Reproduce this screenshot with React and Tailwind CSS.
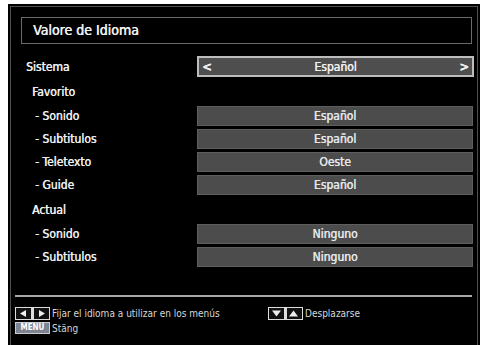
import React from 'react';

const favoritos = [
    { label: '- Sonido', value: 'Español' },
    { label: '- Subtitulos', value: 'Español' },
    { label: '- Teletexto', value: 'Oeste' },
    { label: '- Guide', value: 'Español' },
];

const actuales = [
    { label: '- Sonido', value: 'Ninguno' },
    { label: '- Subtitulos', value: 'Ninguno' },
];

function ValueRow({ label, value }) {
    return (
        <div className="flex h-[20px] items-center">
            <div className="w-[176px] pl-[14px] text-[12px] text-[#ececec] [text-shadow:0.4px_0_0_#ececec]">{label}</div>
            <div className="flex h-[20px] w-[276px] items-center justify-center border border-[#5e5e5e] bg-[#4c4c4c] text-[12px] text-[#e6e6e6] [text-shadow:0.4px_0_0_#e6e6e6]">
                {value}
            </div>
        </div>
    );
}

function LeftRightKey() {
    return (
        <svg width="35" height="13" viewBox="0 0 35 13">
            <rect x="0.5" y="0.5" width="34" height="12" fill="#111" stroke="#ddd" />
            <rect x="16" y="1" width="3" height="11" fill="#ddd" />
            <polygon points="11,3 11,10 5,6.5" fill="#eee" />
            <polygon points="24,3 24,10 30,6.5" fill="#eee" />
        </svg>
    );
}

function DownUpKey() {
    return (
        <svg width="35" height="13" viewBox="0 0 35 13">
            <rect x="0.5" y="0.5" width="34" height="12" fill="#111" stroke="#ddd" />
            <rect x="16" y="1" width="3" height="11" fill="#ddd" />
            <polygon points="4,3.5 13,3.5 8.5,9.5" fill="#eee" />
            <polygon points="21,9.5 30,9.5 25.5,3.5" fill="#eee" />
        </svg>
    );
}

export default function App() {
    return (
        <div className="h-[345px] w-[482px] overflow-hidden bg-white pl-[8px] pt-[4px] font-['DejaVu_Sans_Condensed','DejaVu_Sans',sans-serif]">
            <div className="h-[345px] w-[472px] bg-black px-[2px] pt-[2px]">
                <div className="h-[345px] border border-[#4e4e4e] pl-[10px]">
                    {/* title */}
                    <div className="mt-[10px] flex h-[27px] w-[451px] items-center border border-[#6a6a6a] pl-[11px] text-[14px] text-[#f2f2f2] [text-shadow:0.4px_0_0_#f2f2f2]">
                        Valore de Idioma
                    </div>

                    {/* Sistema */}
                    <div className="mt-[12px] flex h-[21px] items-center">
                        <div className="w-[176px] pl-[5px] text-[12px] text-[#f0f0f0] [text-shadow:0.4px_0_0_#f0f0f0]">Sistema</div>
                        <div className="flex h-[21px] w-[277px] items-center justify-between border-2 border-[#bdbdbd] bg-[#4e4e4e] px-[3px] text-[12px] text-[#f0f0f0] [text-shadow:0.4px_0_0_#f0f0f0]">
                            <span className="text-[13px] font-bold">&lt;</span>
                            <span>Español</span>
                            <span className="text-[13px] font-bold">&gt;</span>
                        </div>
                    </div>

                    <div className="flex h-[29px] items-center pl-[11px] text-[12px] text-[#f0f0f0] [text-shadow:0.4px_0_0_#f0f0f0]">Favorito</div>
                    <div className="flex flex-col gap-[3px]">
                        {favoritos.map((r, i) => (
                            <ValueRow key={i} label={r.label} value={r.value} />
                        ))}
                    </div>

                    <div className="flex h-[29px] items-center pl-[11px] text-[12px] text-[#f0f0f0] [text-shadow:0.4px_0_0_#f0f0f0]">Actual</div>
                    <div className="flex flex-col gap-[3px]">
                        {actuales.map((r, i) => (
                            <ValueRow key={i} label={r.label} value={r.value} />
                        ))}
                    </div>

                    {/* separator */}
                    <div className="-ml-[6px] mt-[28px] h-[2px] w-[457px] bg-[#a8a8a8]" />

                    {/* footer */}
                    <div className="-ml-[6px] mt-[10px] flex flex-col gap-[2px] text-[10px] text-[#d8d8d8]">
                        <div className="flex h-[13px] items-center">
                            <div className="flex w-[253px] items-center gap-[2px]">
                                <LeftRightKey />
                                <span>Fijar el idioma a utilizar en los menús</span>
                            </div>
                            <div className="flex items-center gap-[2px]">
                                <DownUpKey />
                                <span>Desplazarse</span>
                            </div>
                        </div>
                        <div className="flex h-[12px] items-center gap-[2px]">
                            <div className="flex h-[12px] w-[35px] items-center justify-center border border-[#ccc] bg-[#7d8494] text-[8px] font-bold text-white">
                                MENU
                            </div>
                            <span>Stäng</span>
                        </div>
                    </div>
                </div>
            </div>
        </div>
    );
}
